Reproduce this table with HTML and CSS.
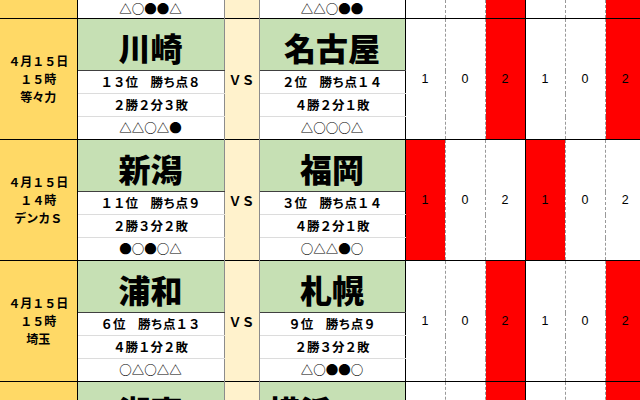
FILE: index.html
```html
<!DOCTYPE html>
<html lang="ja">
<head>
<meta charset="utf-8">
<link rel="stylesheet" href="styles.css">
</head>
<body>
<table class="sheet">
  <colgroup>
    <col class="c-date"><col class="c-home"><col class="c-vs"><col class="c-away">
    <col class="c-num"><col class="c-num"><col class="c-num"><col class="c-num"><col class="c-num"><col class="c-num">
  </colgroup>
  <tr class="part-top">
    <td class="date"></td>
    <td class="info last">△○●●△</td>
    <td class="vs"></td>
    <td class="info last away">△△○●●</td>
    <td class="num"></td><td class="num dash"></td><td class="num dash red"></td>
    <td class="num mid"></td><td class="num dash"></td><td class="num dash red"></td>
  </tr>

  <tr class="start">
    <td class="date" rowspan="4">４月１５日<br>１５時<br>等々力</td>
    <td class="name">川崎</td>
    <td class="vs" rowspan="4">ＶＳ</td>
    <td class="name away">名古屋</td>
    <td class="num" rowspan="4">1</td><td class="num dash" rowspan="4">0</td><td class="num dash red" rowspan="4">2</td>
    <td class="num mid" rowspan="4">1</td><td class="num dash" rowspan="4">0</td><td class="num dash red" rowspan="4">2</td>
  </tr>
  <tr><td class="info first">１３位　勝ち点８</td><td class="info first away">２位　勝ち点１４</td></tr>
  <tr><td class="info">２勝２分３敗</td><td class="info away">４勝２分１敗</td></tr>
  <tr><td class="info last">△△○△●</td><td class="info last away">△○○○△</td></tr>

  <tr class="start">
    <td class="date" rowspan="4">４月１５日<br>１４時<br>デンカＳ</td>
    <td class="name">新潟</td>
    <td class="vs" rowspan="4">ＶＳ</td>
    <td class="name away">福岡</td>
    <td class="num red" rowspan="4">1</td><td class="num dash" rowspan="4">0</td><td class="num dash" rowspan="4">2</td>
    <td class="num mid red" rowspan="4">1</td><td class="num dash" rowspan="4">0</td><td class="num dash" rowspan="4">2</td>
  </tr>
  <tr><td class="info first">１１位　勝ち点９</td><td class="info first away">３位　勝ち点１４</td></tr>
  <tr><td class="info">２勝３分２敗</td><td class="info away">４勝２分１敗</td></tr>
  <tr><td class="info last">●○●○△</td><td class="info last away">○△△●○</td></tr>

  <tr class="start">
    <td class="date" rowspan="4">４月１５日<br>１５時<br>埼玉</td>
    <td class="name">浦和</td>
    <td class="vs" rowspan="4">ＶＳ</td>
    <td class="name away">札幌</td>
    <td class="num" rowspan="4">1</td><td class="num dash" rowspan="4">0</td><td class="num dash red" rowspan="4">2</td>
    <td class="num mid" rowspan="4">1</td><td class="num dash" rowspan="4">0</td><td class="num dash red" rowspan="4">2</td>
  </tr>
  <tr><td class="info first">６位　勝ち点１３</td><td class="info first away">９位　勝ち点９</td></tr>
  <tr><td class="info">４勝１分２敗</td><td class="info away">２勝３分２敗</td></tr>
  <tr><td class="info last">○△○△△</td><td class="info last away">△○●●○</td></tr>

  <tr class="start">
    <td class="date"></td>
    <td class="name">湘南</td>
    <td class="vs"></td>
    <td class="name away">横浜ＦＭ</td>
    <td class="num"></td><td class="num dash"></td><td class="num dash red"></td>
    <td class="num mid"></td><td class="num dash"></td><td class="num dash red"></td>
  </tr>
</table>
</body>
</html>
```
FILE: styles.css
```css
html, body {
  margin: 0;
  padding: 0;
  background: #ffffff;
  overflow: hidden;
  width: 640px;
  height: 400px;
}
.sheet {
  border-collapse: collapse;
  table-layout: fixed;
  width: 645px;
  font-family: "Noto Sans CJK JP", "Liberation Sans", sans-serif;
  color: #000;
}
.c-date { width: 77px; }
.c-home { width: 147px; }
.c-vs { width: 35px; }
.c-away { width: 146px; }
.c-num { width: 40px; }

.sheet td {
  padding: 0;
  text-align: center;
  vertical-align: middle;
  white-space: nowrap;
  overflow: hidden;
}
.part-top td { height: 18px; line-height: 18px; }

.start td { border-top: 1px solid #000; }

.date {
  background: #ffd966;
  border-right: 1px solid #000;
  font-size: 12px;
  font-weight: 700;
  line-height: 18px;
}
.name {
  background: #c6e0b4;
  height: 47px;
  font-size: 32px;
  font-weight: 900;
  line-height: 44px;
  padding-top: 4px !important;
  border-bottom: 1px solid #404040;
  border-right: 1px solid #8c8c8c;
}
.info {
  height: 22px;
  font-size: 12.5px;
  font-weight: 700;
  line-height: 18px;
  border-bottom: 1px solid #dcdcdc;
  border-right: 1px solid #8c8c8c;
}
.info.last { border-bottom: none; }
.vs {
  background: #fff2cc;
  font-size: 13px;
  font-weight: 700;
  border-right: 1px solid #8c8c8c;
}
.away { border-right: 1px solid #000 !important; }
.num {
  font-family: "Liberation Sans", Arial, sans-serif;
  font-size: 12.5px;
  line-height: 14px;
  background: #fff;
}
.num.dash { border-left: 1px dashed #999; }
.num.mid { border-left: 1px solid #000; }
.num.red { background: #ff0000; }
```
